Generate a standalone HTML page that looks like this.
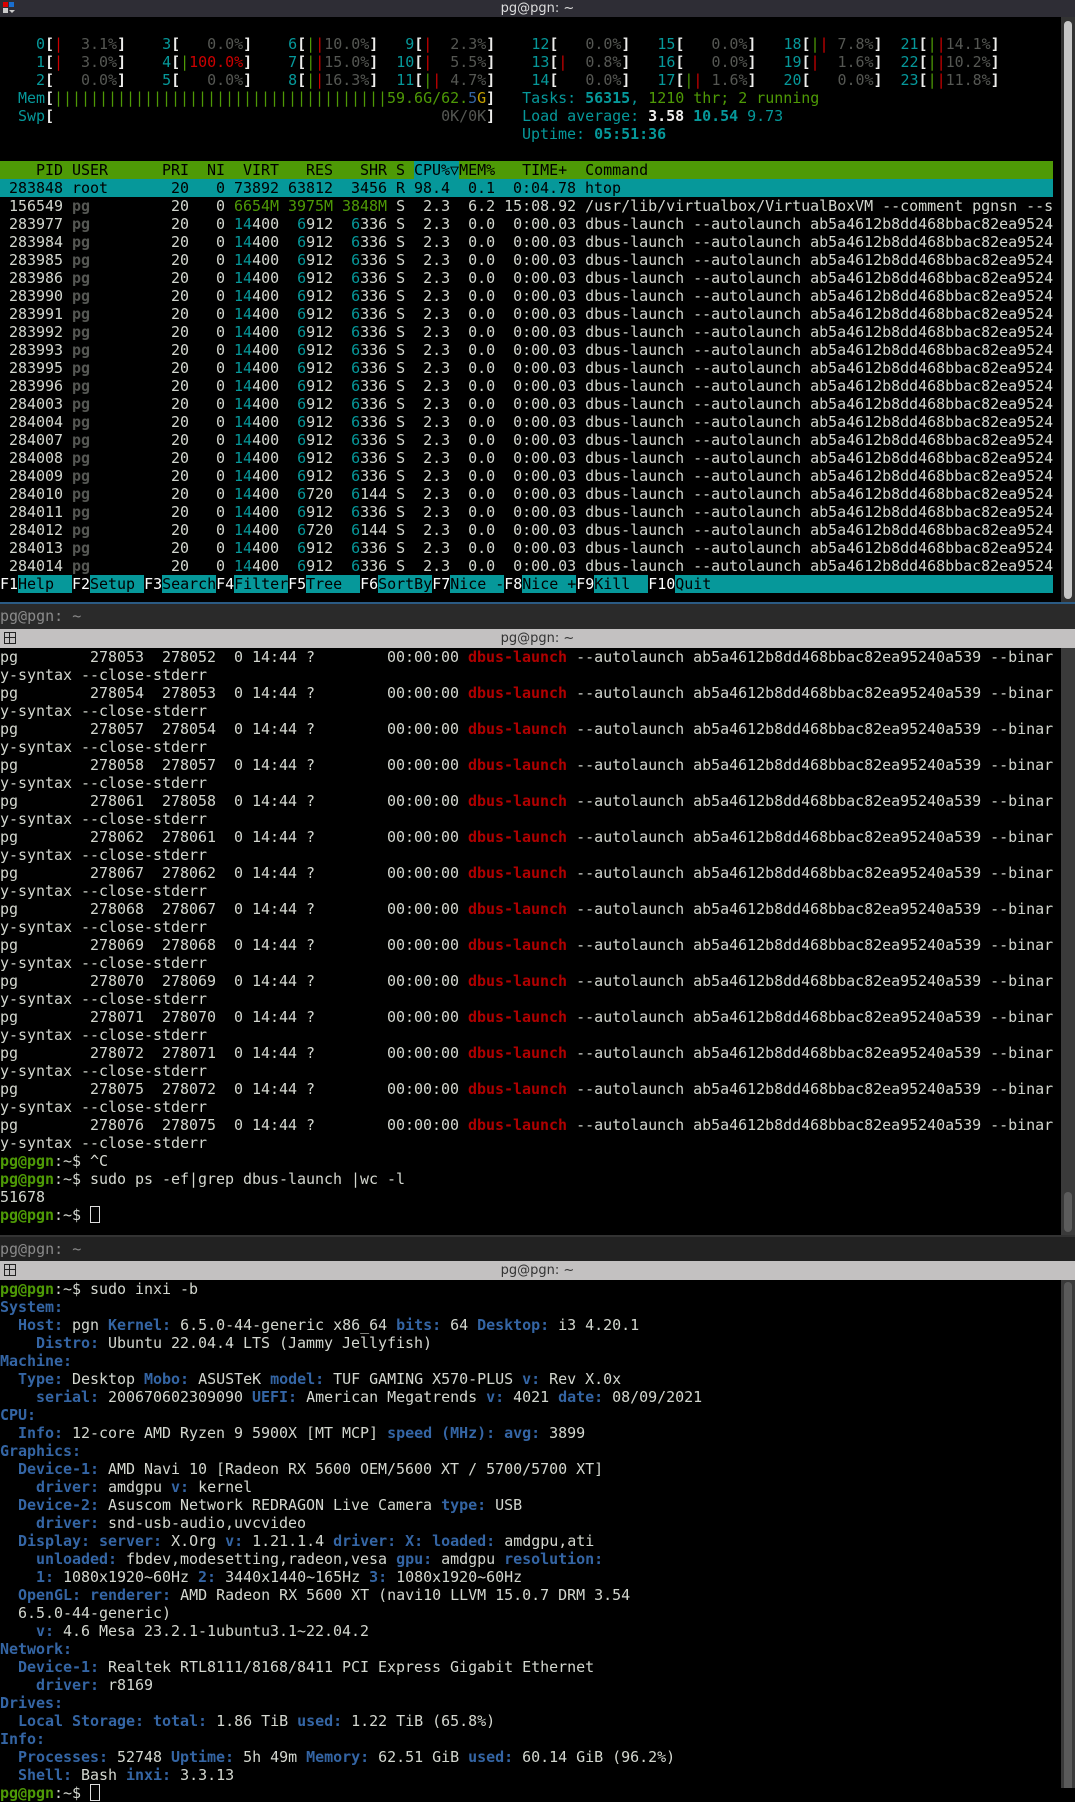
<!DOCTYPE html>
<html><head><meta charset="utf-8">
<style>
html,body{margin:0;padding:0;background:#000;}
body{width:1075px;height:1788px;position:relative;overflow:hidden;}
.t{position:absolute;left:0;font-family:"DejaVu Sans Mono","Liberation Mono",monospace;font-size:15px;line-height:18px;white-space:pre;color:#d3d7cf;letter-spacing:-0.03px;}
.c{color:#06989a}.g{color:#4e9a06}.r{color:#cc0000}.w{color:#eeeeec;font-weight:bold}.d{color:#555753}.db{color:#555753;font-weight:bold}
.cb{color:#06989a;font-weight:bold}.y{color:#c4a000}.bl{color:#3465a4}
.dr{color:#b00000;font-weight:bold}.pr{color:#4e9a06;font-weight:bold}
.k{color:#3465a4;font-weight:bold}
.hl{background:#06989a;color:#000}
.hd{background:#4e9a06;color:#000;width:1053px}
.sel{background:#06989a;color:#000;width:1053px}
.bar{position:absolute;left:0;width:1075px;}
.ttl{position:absolute;left:0;width:1075px;text-align:center;font-family:"DejaVu Sans","Liberation Sans",sans-serif;font-size:13px;}
.tab{position:absolute;left:0;font-family:"DejaVu Sans Mono",monospace;font-size:15px;color:#8a8a8a;white-space:pre;}
.sb{position:absolute;left:1061px;width:14px;background:#3a3a3a;}
.th{position:absolute;left:1064px;width:8px;border-radius:4px;}
.cur{display:inline-block;width:8px;height:15px;border:1px solid #ddd;vertical-align:-3px;}
</style></head><body>

<div class="bar" style="top:0;height:17px;background:#2e2d35;"></div>
<div style="position:absolute;left:3px;top:2px;width:5px;height:5px;background:#d00;"></div>
<div style="position:absolute;left:9px;top:2px;width:5px;height:5px;background:#1a6fd0;"></div>
<div style="position:absolute;left:3px;top:8px;width:5px;height:5px;background:#ccc;"></div>
<div style="position:absolute;left:9px;top:10px;width:0;height:0;border-left:3px solid transparent;border-right:3px solid transparent;border-top:3px solid #ccc;"></div>
<div class="ttl" style="top:0;line-height:17px;color:#ddd;">pg@pgn: ~</div>

<div class="t" style="top:35px"><span class="c">    0</span><span class="w">[</span><span class="r">|</span><span class="d">  3.1%</span><span class="w">]</span><span class="c">    3</span><span class="w">[</span><span class="d">   0.0%</span><span class="w">]</span><span class="c">    6</span><span class="w">[</span><span class="g">|</span><span class="r">|</span><span class="d">10.0%</span><span class="w">]</span><span class="c">   9</span><span class="w">[</span><span class="r">|</span><span class="d">  2.3%</span><span class="w">]</span><span class="c">    12</span><span class="w">[</span><span class="d">   0.0%</span><span class="w">]</span><span class="c">   15</span><span class="w">[</span><span class="d">   0.0%</span><span class="w">]</span><span class="c">   18</span><span class="w">[</span><span class="g">|</span><span class="r">|</span><span class="d"> 7.8%</span><span class="w">]</span><span class="c">  21</span><span class="w">[</span><span class="g">|</span><span class="r">|</span><span class="d">14.1%</span><span class="w">]</span></div>
<div class="t" style="top:53px"><span class="c">    1</span><span class="w">[</span><span class="r">|</span><span class="d">  3.0%</span><span class="w">]</span><span class="c">    4</span><span class="w">[</span><span class="g">|</span><span class="r">100.0%</span><span class="w">]</span><span class="c">    7</span><span class="w">[</span><span class="g">|</span><span class="r">|</span><span class="d">15.0%</span><span class="w">]</span><span class="c">  10</span><span class="w">[</span><span class="r">|</span><span class="d">  5.5%</span><span class="w">]</span><span class="c">    13</span><span class="w">[</span><span class="r">|</span><span class="d">  0.8%</span><span class="w">]</span><span class="c">   16</span><span class="w">[</span><span class="d">   0.0%</span><span class="w">]</span><span class="c">   19</span><span class="w">[</span><span class="r">|</span><span class="d">  1.6%</span><span class="w">]</span><span class="c">  22</span><span class="w">[</span><span class="g">|</span><span class="r">|</span><span class="d">10.2%</span><span class="w">]</span></div>
<div class="t" style="top:71px"><span class="c">    2</span><span class="w">[</span><span class="d">   0.0%</span><span class="w">]</span><span class="c">    5</span><span class="w">[</span><span class="d">   0.0%</span><span class="w">]</span><span class="c">    8</span><span class="w">[</span><span class="g">|</span><span class="r">|</span><span class="d">16.3%</span><span class="w">]</span><span class="c">  11</span><span class="w">[</span><span class="g">|</span><span class="r">|</span><span class="d"> 4.7%</span><span class="w">]</span><span class="c">    14</span><span class="w">[</span><span class="d">   0.0%</span><span class="w">]</span><span class="c">   17</span><span class="w">[</span><span class="g">|</span><span class="r">|</span><span class="d"> 1.6%</span><span class="w">]</span><span class="c">   20</span><span class="w">[</span><span class="d">   0.0%</span><span class="w">]</span><span class="c">  23</span><span class="w">[</span><span class="g">|</span><span class="r">|</span><span class="d">11.8%</span><span class="w">]</span></div>
<div class="t" style="top:89px"><span class="c">  Mem</span><span class="w">[</span><span class="g">|||||||||||||||||||||||||||||||||||||59.6G/62.</span><span class="bl">5</span><span class="y">G</span><span class="w">]</span>   <span class="c">Tasks: </span><span class="cb">56315</span><span class="c">, </span><span class="g">1210 thr; 2 running</span></div>
<div class="t" style="top:107px"><span class="c">  Swp</span><span class="w">[</span>                                           <span class="d">0K/0K</span><span class="w">]</span>   <span class="c">Load average: </span><span class="w">3.58 </span><span class="cb">10.54 </span><span class="c">9.73</span></div>
<div class="t" style="top:125px">                                                          <span class="c">Uptime: </span><span class="cb">05:51:36</span></div>

<div class="t hd" style="top:161px">    PID USER      PRI  NI  VIRT   RES   SHR S <span class="hl">CPU%▽</span>MEM%   TIME+  Command</div>
<div class="t sel" style="top:179px"> 283848 root       20   0 73892 63812  3456 R 98.4  0.1  0:04.78 htop</div>
<div class="t" style="top:197px"> 156549 <span class="db">pg</span>         20   0 <span class="g">6654M 3975M 3848M</span> S  2.3  6.2 15:08.92 /usr/lib/virtualbox/VirtualBoxVM --comment pgnsn --s</div>
<div class="t" style="top:215px"> 283977 <span class="db">pg</span>         20   0 <span class="c">14</span>400  <span class="c">6</span>912  <span class="c">6</span>336 S  2.3  0.0  0:00.03 dbus-launch --autolaunch ab5a4612b8dd468bbac82ea9524
 283984 <span class="db">pg</span>         20   0 <span class="c">14</span>400  <span class="c">6</span>912  <span class="c">6</span>336 S  2.3  0.0  0:00.03 dbus-launch --autolaunch ab5a4612b8dd468bbac82ea9524
 283985 <span class="db">pg</span>         20   0 <span class="c">14</span>400  <span class="c">6</span>912  <span class="c">6</span>336 S  2.3  0.0  0:00.03 dbus-launch --autolaunch ab5a4612b8dd468bbac82ea9524
 283986 <span class="db">pg</span>         20   0 <span class="c">14</span>400  <span class="c">6</span>912  <span class="c">6</span>336 S  2.3  0.0  0:00.03 dbus-launch --autolaunch ab5a4612b8dd468bbac82ea9524
 283990 <span class="db">pg</span>         20   0 <span class="c">14</span>400  <span class="c">6</span>912  <span class="c">6</span>336 S  2.3  0.0  0:00.03 dbus-launch --autolaunch ab5a4612b8dd468bbac82ea9524
 283991 <span class="db">pg</span>         20   0 <span class="c">14</span>400  <span class="c">6</span>912  <span class="c">6</span>336 S  2.3  0.0  0:00.03 dbus-launch --autolaunch ab5a4612b8dd468bbac82ea9524
 283992 <span class="db">pg</span>         20   0 <span class="c">14</span>400  <span class="c">6</span>912  <span class="c">6</span>336 S  2.3  0.0  0:00.03 dbus-launch --autolaunch ab5a4612b8dd468bbac82ea9524
 283993 <span class="db">pg</span>         20   0 <span class="c">14</span>400  <span class="c">6</span>912  <span class="c">6</span>336 S  2.3  0.0  0:00.03 dbus-launch --autolaunch ab5a4612b8dd468bbac82ea9524
 283995 <span class="db">pg</span>         20   0 <span class="c">14</span>400  <span class="c">6</span>912  <span class="c">6</span>336 S  2.3  0.0  0:00.03 dbus-launch --autolaunch ab5a4612b8dd468bbac82ea9524
 283996 <span class="db">pg</span>         20   0 <span class="c">14</span>400  <span class="c">6</span>912  <span class="c">6</span>336 S  2.3  0.0  0:00.03 dbus-launch --autolaunch ab5a4612b8dd468bbac82ea9524
 284003 <span class="db">pg</span>         20   0 <span class="c">14</span>400  <span class="c">6</span>912  <span class="c">6</span>336 S  2.3  0.0  0:00.03 dbus-launch --autolaunch ab5a4612b8dd468bbac82ea9524
 284004 <span class="db">pg</span>         20   0 <span class="c">14</span>400  <span class="c">6</span>912  <span class="c">6</span>336 S  2.3  0.0  0:00.03 dbus-launch --autolaunch ab5a4612b8dd468bbac82ea9524
 284007 <span class="db">pg</span>         20   0 <span class="c">14</span>400  <span class="c">6</span>912  <span class="c">6</span>336 S  2.3  0.0  0:00.03 dbus-launch --autolaunch ab5a4612b8dd468bbac82ea9524
 284008 <span class="db">pg</span>         20   0 <span class="c">14</span>400  <span class="c">6</span>912  <span class="c">6</span>336 S  2.3  0.0  0:00.03 dbus-launch --autolaunch ab5a4612b8dd468bbac82ea9524
 284009 <span class="db">pg</span>         20   0 <span class="c">14</span>400  <span class="c">6</span>912  <span class="c">6</span>336 S  2.3  0.0  0:00.03 dbus-launch --autolaunch ab5a4612b8dd468bbac82ea9524
 284010 <span class="db">pg</span>         20   0 <span class="c">14</span>400  <span class="c">6</span>720  <span class="c">6</span>144 S  2.3  0.0  0:00.03 dbus-launch --autolaunch ab5a4612b8dd468bbac82ea9524
 284011 <span class="db">pg</span>         20   0 <span class="c">14</span>400  <span class="c">6</span>912  <span class="c">6</span>336 S  2.3  0.0  0:00.03 dbus-launch --autolaunch ab5a4612b8dd468bbac82ea9524
 284012 <span class="db">pg</span>         20   0 <span class="c">14</span>400  <span class="c">6</span>720  <span class="c">6</span>144 S  2.3  0.0  0:00.03 dbus-launch --autolaunch ab5a4612b8dd468bbac82ea9524
 284013 <span class="db">pg</span>         20   0 <span class="c">14</span>400  <span class="c">6</span>912  <span class="c">6</span>336 S  2.3  0.0  0:00.03 dbus-launch --autolaunch ab5a4612b8dd468bbac82ea9524
 284014 <span class="db">pg</span>         20   0 <span class="c">14</span>400  <span class="c">6</span>912  <span class="c">6</span>336 S  2.3  0.0  0:00.03 dbus-launch --autolaunch ab5a4612b8dd468bbac82ea9524</div>
<div class="t" style="top:575px;width:1053px;background:#06989a;color:#000;"><span style="background:#000;color:#fff">F1</span>Help  <span style="background:#000;color:#fff">F2</span>Setup <span style="background:#000;color:#fff">F3</span>Search<span style="background:#000;color:#fff">F4</span>Filter<span style="background:#000;color:#fff">F5</span>Tree  <span style="background:#000;color:#fff">F6</span>SortBy<span style="background:#000;color:#fff">F7</span>Nice -<span style="background:#000;color:#fff">F8</span>Nice +<span style="background:#000;color:#fff">F9</span>Kill  <span style="background:#000;color:#fff">F10</span>Quit  </div>

<div class="sb" style="top:17px;height:586px;background:#333;"></div>
<div class="th" style="top:21px;height:578px;background:#c6c6c6;"></div>

<div class="bar" style="top:602px;height:2px;background:#2b5b84;"></div>
<div class="bar" style="top:604px;height:25px;background:#2a2a2a;"></div>
<div class="tab" style="top:606px;line-height:20px;">pg@pgn: ~</div>
<div class="bar" style="top:629px;height:19px;background:#c3c1c1;"></div>
<div style="position:absolute;left:4px;top:632px;width:10px;height:10px;border:1px solid #222;"></div>
<div style="position:absolute;left:9px;top:632px;width:1px;height:11px;background:#222;"></div>
<div style="position:absolute;left:4px;top:637px;width:11px;height:1px;background:#222;"></div>
<div class="ttl" style="top:629px;line-height:19px;color:#333;">pg@pgn: ~</div>

<div class="t" style="top:648px">pg        278053  278052  0 14:44 ?        00:00:00 <span class="dr">dbus-launch</span> --autolaunch ab5a4612b8dd468bbac82ea95240a539 --binar
y-syntax --close-stderr
pg        278054  278053  0 14:44 ?        00:00:00 <span class="dr">dbus-launch</span> --autolaunch ab5a4612b8dd468bbac82ea95240a539 --binar
y-syntax --close-stderr
pg        278057  278054  0 14:44 ?        00:00:00 <span class="dr">dbus-launch</span> --autolaunch ab5a4612b8dd468bbac82ea95240a539 --binar
y-syntax --close-stderr
pg        278058  278057  0 14:44 ?        00:00:00 <span class="dr">dbus-launch</span> --autolaunch ab5a4612b8dd468bbac82ea95240a539 --binar
y-syntax --close-stderr
pg        278061  278058  0 14:44 ?        00:00:00 <span class="dr">dbus-launch</span> --autolaunch ab5a4612b8dd468bbac82ea95240a539 --binar
y-syntax --close-stderr
pg        278062  278061  0 14:44 ?        00:00:00 <span class="dr">dbus-launch</span> --autolaunch ab5a4612b8dd468bbac82ea95240a539 --binar
y-syntax --close-stderr
pg        278067  278062  0 14:44 ?        00:00:00 <span class="dr">dbus-launch</span> --autolaunch ab5a4612b8dd468bbac82ea95240a539 --binar
y-syntax --close-stderr
pg        278068  278067  0 14:44 ?        00:00:00 <span class="dr">dbus-launch</span> --autolaunch ab5a4612b8dd468bbac82ea95240a539 --binar
y-syntax --close-stderr
pg        278069  278068  0 14:44 ?        00:00:00 <span class="dr">dbus-launch</span> --autolaunch ab5a4612b8dd468bbac82ea95240a539 --binar
y-syntax --close-stderr
pg        278070  278069  0 14:44 ?        00:00:00 <span class="dr">dbus-launch</span> --autolaunch ab5a4612b8dd468bbac82ea95240a539 --binar
y-syntax --close-stderr
pg        278071  278070  0 14:44 ?        00:00:00 <span class="dr">dbus-launch</span> --autolaunch ab5a4612b8dd468bbac82ea95240a539 --binar
y-syntax --close-stderr
pg        278072  278071  0 14:44 ?        00:00:00 <span class="dr">dbus-launch</span> --autolaunch ab5a4612b8dd468bbac82ea95240a539 --binar
y-syntax --close-stderr
pg        278075  278072  0 14:44 ?        00:00:00 <span class="dr">dbus-launch</span> --autolaunch ab5a4612b8dd468bbac82ea95240a539 --binar
y-syntax --close-stderr
pg        278076  278075  0 14:44 ?        00:00:00 <span class="dr">dbus-launch</span> --autolaunch ab5a4612b8dd468bbac82ea95240a539 --binar
y-syntax --close-stderr
<span class="pr">pg@pgn</span>:~$ ^C
<span class="pr">pg@pgn</span>:~$ sudo ps -ef|grep dbus-launch |wc -l
51678
<span class="pr">pg@pgn</span>:~$ <span class="cur"></span></div>

<div class="sb" style="top:648px;height:587px;"></div>
<div class="th" style="top:1192px;height:40px;background:#5c5c5c;"></div>

<div class="bar" style="top:1235px;height:2px;background:#333;"></div>
<div class="bar" style="top:1237px;height:24px;background:#222;"></div>
<div class="tab" style="top:1239px;line-height:20px;">pg@pgn: ~</div>
<div class="bar" style="top:1261px;height:19px;background:#c3c1c1;"></div>
<div style="position:absolute;left:4px;top:1264px;width:10px;height:10px;border:1px solid #222;"></div>
<div style="position:absolute;left:9px;top:1264px;width:1px;height:11px;background:#222;"></div>
<div style="position:absolute;left:4px;top:1269px;width:11px;height:1px;background:#222;"></div>
<div class="ttl" style="top:1261px;line-height:19px;color:#333;">pg@pgn: ~</div>

<div class="t" style="top:1280px"><span class="pr">pg@pgn</span>:~$ sudo inxi -b
<span class="k">System:</span>
  <span class="k">Host:</span> pgn <span class="k">Kernel:</span> 6.5.0-44-generic x86_64 <span class="k">bits:</span> 64 <span class="k">Desktop:</span> i3 4.20.1
    <span class="k">Distro:</span> Ubuntu 22.04.4 LTS (Jammy Jellyfish)
<span class="k">Machine:</span>
  <span class="k">Type:</span> Desktop <span class="k">Mobo:</span> ASUSTeK <span class="k">model:</span> TUF GAMING X570-PLUS <span class="k">v:</span> Rev X.0x
    <span class="k">serial:</span> 200670602309090 <span class="k">UEFI:</span> American Megatrends <span class="k">v:</span> 4021 <span class="k">date:</span> 08/09/2021
<span class="k">CPU:</span>
  <span class="k">Info:</span> 12-core AMD Ryzen 9 5900X [MT MCP] <span class="k">speed (MHz): avg:</span> 3899
<span class="k">Graphics:</span>
  <span class="k">Device-1:</span> AMD Navi 10 [Radeon RX 5600 OEM/5600 XT / 5700/5700 XT]
    <span class="k">driver:</span> amdgpu <span class="k">v:</span> kernel
  <span class="k">Device-2:</span> Asuscom Network REDRAGON Live Camera <span class="k">type:</span> USB
    <span class="k">driver:</span> snd-usb-audio,uvcvideo
  <span class="k">Display:</span> <span class="k">server:</span> X.Org <span class="k">v:</span> 1.21.1.4 <span class="k">driver:</span> <span class="k">X:</span> <span class="k">loaded:</span> amdgpu,ati
    <span class="k">unloaded:</span> fbdev,modesetting,radeon,vesa <span class="k">gpu:</span> amdgpu <span class="k">resolution:</span>
    <span class="k">1:</span> 1080x1920~60Hz <span class="k">2:</span> 3440x1440~165Hz <span class="k">3:</span> 1080x1920~60Hz
  <span class="k">OpenGL:</span> <span class="k">renderer:</span> AMD Radeon RX 5600 XT (navi10 LLVM 15.0.7 DRM 3.54
  6.5.0-44-generic)
    <span class="k">v:</span> 4.6 Mesa 23.2.1-1ubuntu3.1~22.04.2
<span class="k">Network:</span>
  <span class="k">Device-1:</span> Realtek RTL8111/8168/8411 PCI Express Gigabit Ethernet
    <span class="k">driver:</span> r8169
<span class="k">Drives:</span>
  <span class="k">Local Storage:</span> <span class="k">total:</span> 1.86 TiB <span class="k">used:</span> 1.22 TiB (65.8%)
<span class="k">Info:</span>
  <span class="k">Processes:</span> 52748 <span class="k">Uptime:</span> 5h 49m <span class="k">Memory:</span> 62.51 GiB <span class="k">used:</span> 60.14 GiB (96.2%)
  <span class="k">Shell:</span> Bash <span class="k">inxi:</span> 3.3.13
<span class="pr">pg@pgn</span>:~$ <span class="cur"></span></div>

<div class="sb" style="top:1280px;height:508px;"></div>
<div class="th" style="top:1282px;height:506px;background:#5a5a5a;border-radius:4px 4px 0 0;"></div>

</body></html>
